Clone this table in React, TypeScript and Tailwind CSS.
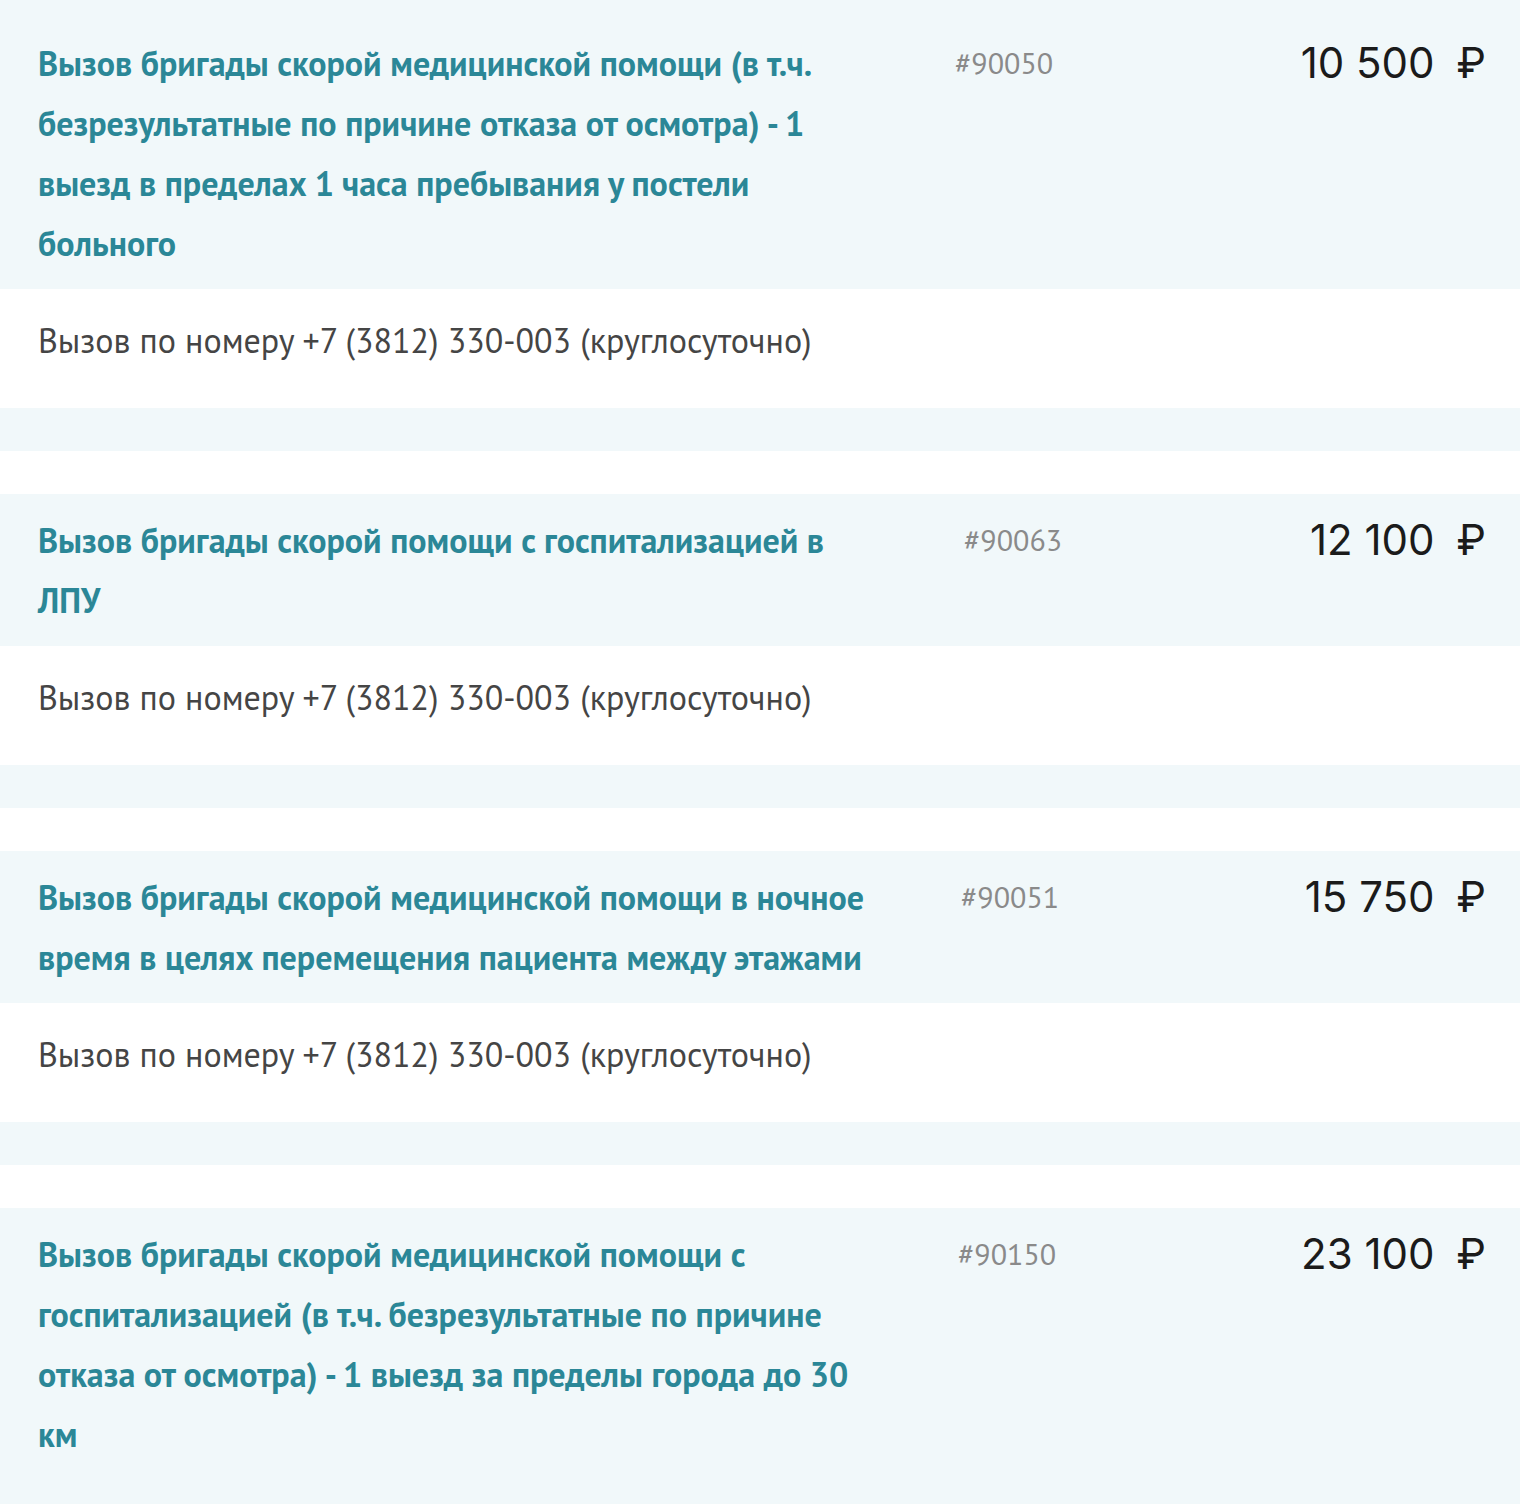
import React from 'react';

interface Service {
  title: string;
  code: string;
  price: string;
  codeClass: string;
}

const services: Service[] = [
  {
    title:
      'Вызов бригады скорой медицинской помощи (в т.ч. безрезультатные по причине отказа от осмотра) - 1 выезд в пределах 1 часа пребывания у постели больного',
    code: '#90050',
    price: '10 500',
    codeClass: 'ml-[81px]',
  },
  {
    title: 'Вызов бригады скорой помощи с госпитализацией в ЛПУ',
    code: '#90063',
    price: '12 100',
    codeClass: 'ml-[90px]',
  },
  {
    title:
      'Вызов бригады скорой медицинской помощи в ночное время в целях перемещения пациента между этажами',
    code: '#90051',
    price: '15 750',
    codeClass: 'ml-[87px]',
  },
  {
    title:
      'Вызов бригады скорой медицинской помощи с госпитализацией (в т.ч. безрезультатные по причине отказа от осмотра) - 1 выезд за пределы города до 30 км',
    code: '#90150',
    price: '23 100',
    codeClass: 'ml-[84px]',
  },
];

const ServiceItem: React.FC<{ item: Service; first: boolean; last: boolean }> = ({ item, first, last }) => {
  return (
    <div>
      <div className={`flex items-start bg-[#f1f8fa] pl-[38px] pr-[34px] ${first ? 'pt-[33px] pb-4' : 'py-4'} ${last ? 'pb-[70px]' : ''}`}>
        <div className="w-[836px] shrink-0 font-['PT_Sans','Lato',sans-serif] text-[34px] font-bold leading-[60px] text-[#2b8797]">
          {item.title}
        </div>
        <div className={`${item.codeClass} font-['PT_Sans','Lato',sans-serif] text-[30px] leading-[60px] text-[#8a8a8a]`}>
          {item.code}
        </div>
        <div className="ml-auto flex items-center leading-[60px] text-[#1b1b1b]">
          <span className="font-['Inter',sans-serif] text-[42px]">{item.price}</span>
          <span className="ml-[22px] font-['Inter',sans-serif] text-[42px]">₽</span>
        </div>
      </div>
      {!last && (
        <>
          <div className="h-[119px] bg-white pl-[38px] pt-[30px] font-['PT_Sans','Lato',sans-serif] text-[34px] leading-[42px] text-[#454545]">
            Вызов по номеру +7 (3812) 330-003 (круглосуточно)
          </div>
          <div className="h-[43px] bg-[#f1f8fa]" />
          <div className="h-[43px] bg-white" />
        </>
      )}
    </div>
  );
};

export default function App() {
  return (
    <div className="min-h-[1504px] w-[1520px] bg-[#f1f8fa]">
      {services.map((s, i) => (
        <ServiceItem key={s.code} item={s} first={i === 0} last={i === services.length - 1} />
      ))}
    </div>
  );
}
